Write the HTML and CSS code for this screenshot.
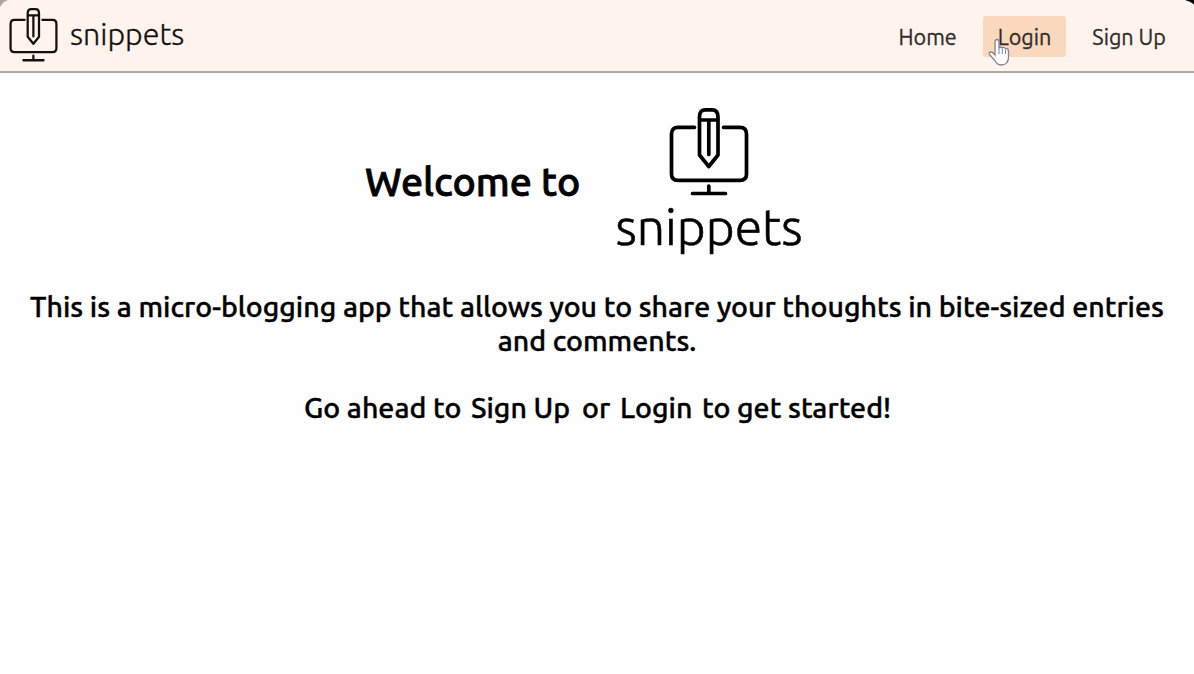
FILE: index.html
```
<!DOCTYPE html>
<html lang="en">
<head>
<meta charset="utf-8">
<title>Snippets</title>
<link rel="stylesheet" href="styles.css">
</head>
<body>
<svg width="0" height="0" class="defs">
  <symbol id="mark" viewBox="0 0 80 90">
    <g fill="none" stroke="currentColor" stroke-width="3.700" stroke-linecap="round" stroke-linejoin="round">
      <path d="M25.500 19.300H9Q2.500 19.300 2.500 26V66Q2.500 72.300 9 72.300H71Q77.500 72.300 77.500 66V26Q77.500 19.300 71 19.300H54.500"/>
      <path d="M30.500 47V9Q30.500 1.900 36.500 1.900H43Q49 1.900 49 9V47L39.800 58.500Z"/>
      <path d="M31 12H48.500M39.800 13V46.500M39.800 78V85M23.500 85.500H56.500"/>
    </g>
  </symbol>
</svg>
<header class="topbar">
  <a class="brand">
    <svg class="brand-mark"><use href="#mark"/></svg>
    <span class="brand-name">snippets</span>
  </a>
  <nav class="nav">
    <a class="nav-link home">Home</a>
    <a class="nav-link active">Login</a>
    <a class="nav-link signup">Sign Up</a>
  </nav>
</header>
<main class="main">
  <section class="welcome">
    <h1 class="title">Welcome to</h1>
    <div class="logo">
      <svg class="logo-mark"><use href="#mark"/></svg>
      <span class="logo-name">snippets</span>
    </div>
  </section>
  <h2 class="intro"><span class="line">This is a micro-blogging app that allows you to share your thoughts in bite-sized entries</span> <span class="line second">and comments.</span></h2>
  <h2 class="start"><span class="ahead">Go ahead to</span><a class="signup-link">Sign Up</a><span class="or">or</span><a class="login-link">Login</a><span class="rest">to get started!</span></h2>
</main>
<svg class="cursor" viewBox="0 0 22 28"><path d="M7 17V4Q7 1.500 9 1.500T11 4V10Q12 8 14 10Q16 8.500 17.500 11Q20.500 9.500 20.500 14V19Q20.500 27 13 27Q9 27 6.500 22L2 17Q0 14 3 14Q5 14 7 17Z" fill="#fff" stroke="#85808d" stroke-width="1.300"/><path d="M11 10V16M14.300 11V16M17.500 12V16" stroke="#85808d" stroke-width="1"/></svg>
<svg class="corner left" viewBox="0 0 12 12"><path d="M0 0H9Q3 1 0 7Z" fill="#aaa6a4"/></svg>
<svg class="corner right" viewBox="0 0 12 12"><path d="M3 0H12V4.500Q8.500 1 3 0Z" fill="#000"/></svg>
</body>
</html>
```
FILE: styles.css
```
* { box-sizing: border-box; }
body {
  margin: 0;
  height: 674px;
  overflow: hidden;
  background: #fefefe;
  color: #000;
  font-family: Ubuntu, "Noto Sans", sans-serif;
}
.defs { position: absolute; }
.topbar {
  display: flex;
  align-items: flex-start;
  justify-content: space-between;
  height: 73px;
  padding-left: 9px;
  padding-right: 13px;
  background: #fff4ed;
  border-bottom: 2px solid #b0a9a7;
}
.brand { display: flex; padding-top: 8px; color: #141010; }
.brand-mark { width: 49px; height: 55px; }
.brand-name {
  margin-left: 12px;
  font-size: 30.500px;
  font-weight: 300;
  line-height: 52px;
  white-space: nowrap;
  -webkit-text-stroke: 0.300px;
}
.nav { display: flex; gap: 11px; padding-top: 16px; color: #302c2b; }
.nav-link {
  height: 41px;
  padding: 0 15px;
  border-radius: 3px;
  font-size: 21.600px;
  line-height: 42px;
  white-space: nowrap;
  -webkit-text-stroke: 0.300px;
}
.active { background: #fad8bd; }
.main { text-align: center; }
.welcome { display: flex; height: 190px; padding-left: 365px; }
.title {
  width: 214px;
  margin: 0;
  padding-top: 79px;
  font-size: 39.400px;
  font-weight: 500;
  line-height: 58px;
  white-space: nowrap;
  text-align: left;
  -webkit-text-stroke: 0.800px;
}
.logo {
  display: flex;
  flex-direction: column;
  align-items: center;
  width: 186px;
  margin-left: 37px;
  padding-top: 35px;
}
.logo-mark { width: 80px; height: 90px; flex: none; }
.logo-name {
  font-size: 50px;
  font-weight: 300;
  line-height: 56px;
  white-space: nowrap;
  -webkit-text-stroke: 0.600px;
}
.intro, .start {
  margin: 0;
  font-size: 28.550px;
  font-weight: 500;
  line-height: 34px;
  -webkit-text-stroke: 0.400px;
}
.intro { padding-top: 26px; }
.line { display: block; white-space: nowrap; }
.start { display: flex; padding-top: 33px; padding-left: 304px; text-align: left; white-space: nowrap; }
.ahead { width: 167px; }
.signup-link { width: 111px; }
.or { width: 38px; }
.login-link { width: 82px; }
.cursor { position: absolute; left: 988px; top: 38px; width: 22px; height: 28px; fill: none; }
.corner { position: absolute; top: 0; width: 12px; height: 12px; }
.left { left: 0; }
.right { right: 0; }
```
